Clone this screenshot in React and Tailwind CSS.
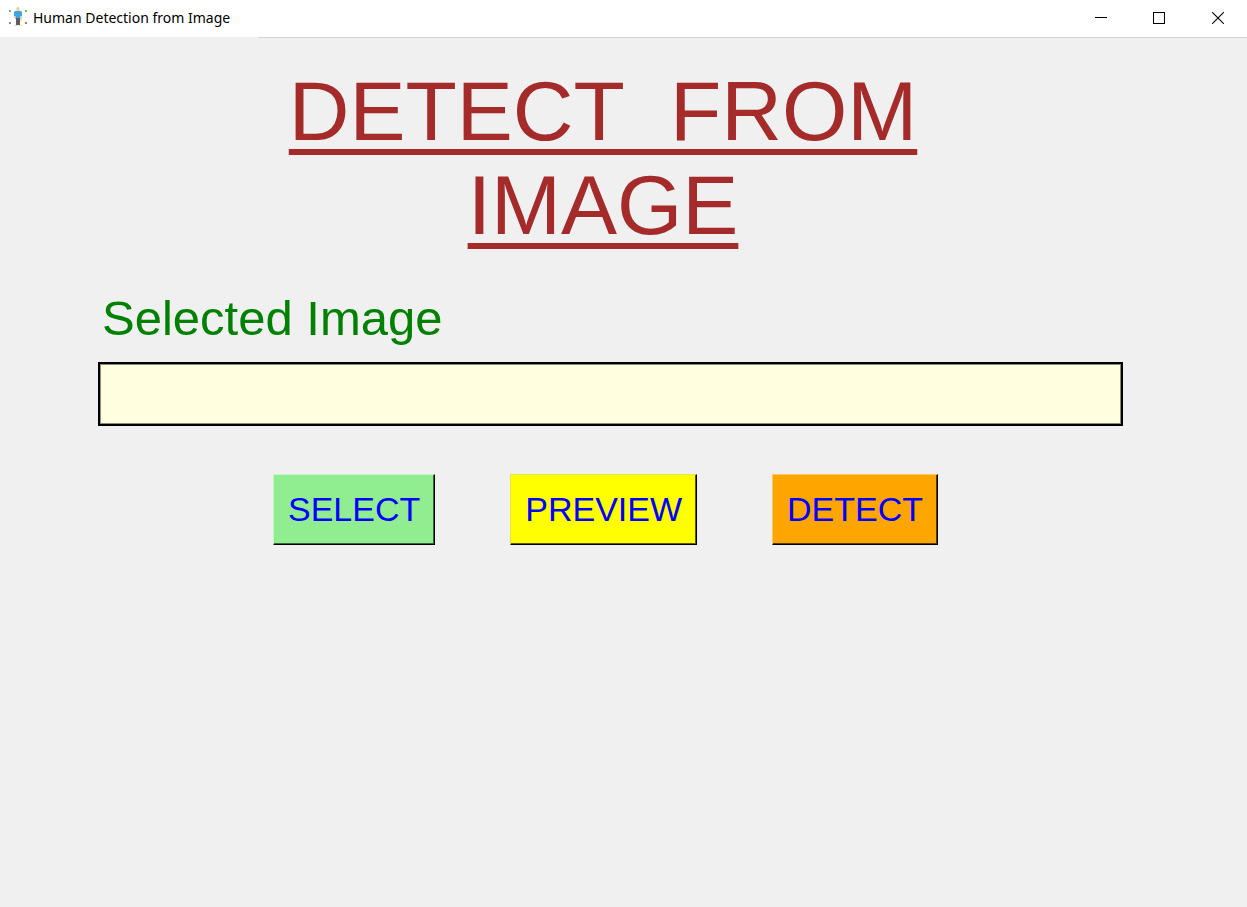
import React from 'react';

const actions = [
  { label: 'SELECT', color: 'bg-[#90ee90] border-t-[#c4f6c4] border-l-[#c4f6c4]', shade: 'shadow-[inset_-1px_-1px_0_#3c643c]' },
  { label: 'PREVIEW', color: 'bg-[#ffff00] border-t-[#e4e44e] border-l-[#e4e44e]', shade: 'shadow-[inset_-1px_-1px_0_#5c5c00]' },
  { label: 'DETECT', color: 'bg-[#ffa500] border-t-[#ffc862] border-l-[#ffc862]', shade: 'shadow-[inset_-1px_-1px_0_#5c3c00]' },
];

function AppIcon() {
  return (
    <svg width="20" height="25" viewBox="0 0 20 25" aria-hidden="true">
      <rect x="1" y="4" width="2" height="2" fill="#6aa3d8" />
      <rect x="17" y="4" width="2" height="2" fill="#7fae5e" />
      <rect x="1" y="16" width="2" height="2" fill="#8d86b8" />
      <rect x="17" y="16" width="2" height="2" fill="#c8736b" />
      <rect x="8.4" y="1" width="3.2" height="4.5" rx="1.5" fill="#f0cf94" />
      <path d="M6.5 8v3.5L9 13M13.5 8v5l-1 2" fill="none" stroke="#f0d29c" strokeWidth="1.2" />
      <path d="M7 5h6l1 1v4h-1.5v2.5h-5V10H6V6z" fill="#3fa4e6" />
      <path d="M8 12h4v7H8z" fill="#5d5d63" />
      <path d="M7 19h2v1H6zM11 19h2l1 1h-3z" fill="#f0cf94" />
    </svg>
  );
}

function WindowControls() {
  const button = 'flex h-9 items-center justify-center';
  return (
    <div className="flex">
      <button type="button" aria-label="Minimize" className={`${button} w-[58px]`}>
        <svg width="12" height="12" shapeRendering="crispEdges"><path d="M0 5.5h12" stroke="#000" /></svg>
      </button>
      <button type="button" aria-label="Maximize" className={`${button} w-[58px]`}>
        <svg width="12" height="12" shapeRendering="crispEdges"><path d="M.5.5h11v11H.5z" fill="none" stroke="#000" /></svg>
      </button>
      <button type="button" aria-label="Close" className={`${button} w-[59px]`}>
        <svg width="12" height="12"><path d="M.2.2l11.6 11.6M11.8.2L.2 11.8" stroke="#000" strokeWidth="1.1" /></svg>
      </button>
    </div>
  );
}

export default function App() {
  return (
    <div className="flex min-h-screen flex-col bg-[#f0f0f0] font-['Liberation_Sans',Arial,sans-serif]">
      <header className="flex items-start justify-between bg-white pb-px pl-2">
        <div className="flex h-9 items-center gap-[5px]">
          <AppIcon />
          <span className="font-['Noto_Sans',sans-serif] text-[14px] leading-5 text-black">Human Detection from Image</span>
        </div>
        <WindowControls />
      </header>
      <div className="ml-[258px] h-px bg-[#d4d4d4]" />
      <main className="flex flex-col pt-[26px] pr-[124px] pl-[98px]">
        <h1 className="pr-[15px] text-center text-[84px] leading-[94px] whitespace-pre text-[#a52a2a] underline decoration-[6px] underline-offset-[9px] [text-decoration-skip-ink:none]">
          {'DETECT  FROM\nIMAGE'}
        </h1>
        <label htmlFor="selected-image" className="mt-[38px] pl-1 text-[49px] leading-[56px] text-[#008000]">
          Selected Image
        </label>
        <input
          id="selected-image"
          type="text"
          className="mt-4 h-16 w-full border-2 border-black bg-[#ffffe0] px-2 text-[35px] text-black shadow-[inset_0_0_0_1px_#8a8a7c] outline-none"
        />
        <div className="mt-12 flex justify-center gap-[75px] pr-[10px]">
          {actions.map(({ label, color, shade }) => (
            <button
              key={label}
              type="button"
              className={`h-[71px] border border-r-black border-b-black px-[14px] text-[34px] text-[#0000ff] ${color} ${shade}`}
            >
              {label}
            </button>
          ))}
        </div>
      </main>
    </div>
  );
}
